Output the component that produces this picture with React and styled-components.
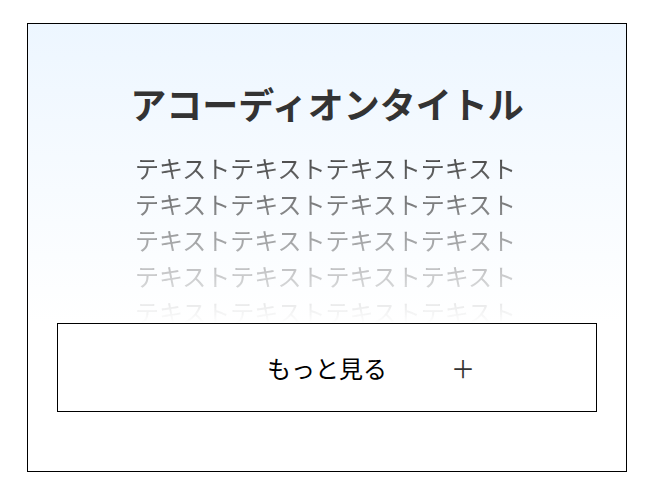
import styled, { createGlobalStyle } from "styled-components";

const GlobalStyle = createGlobalStyle`
  body {
    margin: 0;
    background: #fff;
    font-family: "Noto Sans CJK JP", "Noto Sans", sans-serif;
  }
`;

const Card = styled.section`
  box-sizing: border-box;
  width: 600px;
  margin: 23px 0 0 27px;
  border: 1px solid #000;
  background: #fff;
  padding-bottom: 59px;
`;

const Head = styled.div`
  padding: 52px 29px 0;
  background: linear-gradient(to bottom, #edf6ff 0%, #ffffff 100%);
`;

const Title = styled.h2`
  margin: 0;
  font-size: 36px;
  line-height: 54px;
  font-weight: 700;
  color: #333;
  text-align: center;
`;

// collapsed body: clipped and faded out towards the button
const Body = styled.p`
  width: 384px;
  height: 173px;
  margin: 20px auto 0;
  overflow: hidden;
  font-size: 24px;
  line-height: 36px;
  color: #444;
  -webkit-mask-image: linear-gradient(to bottom, #000 0%, transparent 100%);
  mask-image: linear-gradient(to bottom, #000 0%, transparent 100%);
`;

const MoreButton = styled.button`
  box-sizing: border-box;
  display: flex;
  justify-content: center;
  align-items: center;
  width: 540px;
  height: 89px;
  margin: 0 auto;
  padding: 0 0 0 88px;
  border: 1px solid #000;
  background: #fff;
  font-family: inherit;
  cursor: pointer;
`;

const Label = styled.span`
  font-size: 24px;
  line-height: 1;
  color: #000;
`;

const Plus = styled.span`
  margin-left: 64px;
  font-size: 24px;
  line-height: 1;
  color: #333;
`;

export default function App() {
  return (
    <>
      <GlobalStyle />
      <Card>
        <Head>
          <Title>アコーディオンタイトル</Title>
          <Body>{"テキスト".repeat(24)}</Body>
        </Head>
        <MoreButton type="button">
          <Label>もっと見る</Label>
          <Plus>＋</Plus>
        </MoreButton>
      </Card>
    </>
  );
}
